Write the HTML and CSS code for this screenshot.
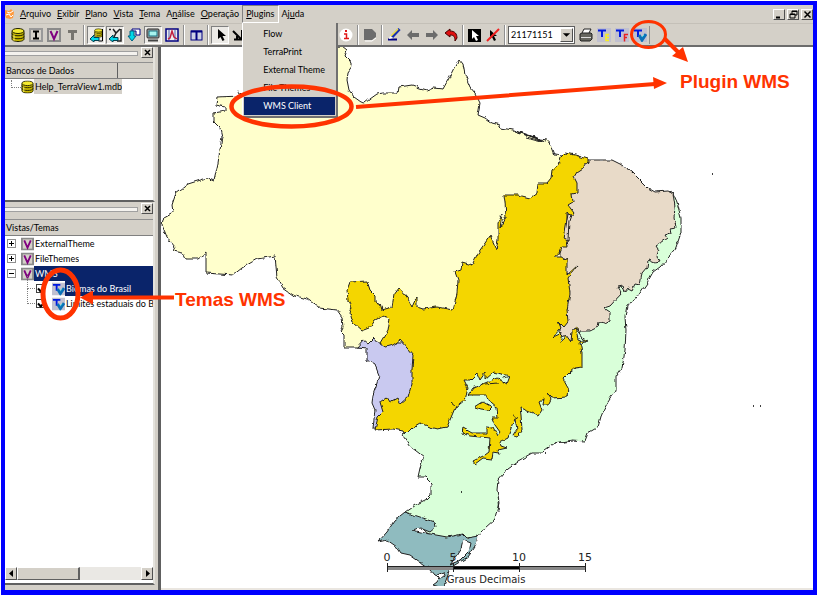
FILE: index.html
```
<!DOCTYPE html>
<html lang="pt-BR">
<head>
<meta charset="utf-8">
<title>TerraView</title>
<link rel="stylesheet" href="styles.css">
</head>
<body>
<svg class="defs" aria-hidden="true">
  <symbol id="db" viewBox="0 0 14 14"><path d="M1 3.500v7.500c0 1.500 2.500 2.500 6 2.500s6-1 6-2.500v-7.500" fill="#c8b800" stroke="#222200"/><ellipse cx="7" cy="3" rx="6" ry="2.500" fill="#f4ea30" stroke="#222200"/><path d="M1 5.500c0 3 12 3 12 0M1 8.500c0 3 12 3 12 0" fill="none" stroke="#222200"/><path d="M3 6.500v6" stroke="#fff36a"/></symbol>
  <symbol id="vbox" viewBox="0 0 14 14"><rect x="1" y="1" width="12" height="12" fill="#d4d0c8" stroke="#8a8a8a" stroke-width="2"/><path d="M3.500 3l3.500 8 3.500-8" fill="none" stroke="#800080" stroke-width="2"/></symbol>
  <symbol id="twms" viewBox="0 0 14 14"><rect width="14" height="14" fill="#c0c0d0"/><path d="M1 2.500h8M5 2v7" stroke="#0018e0" stroke-width="2" fill="none"/><path d="M6 7l3 5 4-6" fill="none" stroke="#0a70b8" stroke-width="3"/><path d="M9 9l2-2" stroke="#3fe0e0"/></symbol>
  <symbol id="cyanarrow" viewBox="0 0 14 14"><path d="M1 11l4-4v2.500h5v3H5V14z" fill="#00d8e8" stroke="#004050"/></symbol>
</svg>

<main class="app">
  <nav class="menubar" aria-label="Menu principal">
    <svg class="logo" viewBox="0 0 10 10"><path d="M0 1l4 1 2-2 3 3-1 6-3 1-4-1-1-3z" fill="#ff9a3c"/><path d="M2 3l3 1 3-2M1 6l3-1 2 3 2-2" stroke="#fff" fill="none"/></svg>
    <button><u>A</u>rquivo</button><button><u>E</u>xibir</button><button><u>P</u>lano</button><button><u>V</u>ista</button><button><u>T</u>ema</button><button>A<u>n</u>álise</button><button><u>O</u>peração</button>
    <div class="menu-open">
      <button class="active" aria-expanded="true"><u>P</u>lugins</button>
      <div class="dropdown" role="menu">
        <button role="menuitem">Flow</button>
        <button role="menuitem">TerraPrint</button>
        <button role="menuitem">External Theme</button>
        <button role="menuitem">File Themes</button>
        <button role="menuitem" class="selected">WMS Client</button>
      </div>
    </div>
    <button>Aj<u>u</u>da</button>
    <div class="window-buttons">
      <button aria-label="Minimizar"><svg viewBox="0 0 9 9"><path d="M1 7.500h4" stroke="#000" stroke-width="2"/></svg></button>
      <button aria-label="Restaurar"><svg viewBox="0 0 9 9"><path d="M3 4V1h5v4H6M3 1.500h5M1 4h5v4H1zM1 4.500h5" stroke="#000" fill="none"/></svg></button>
      <button aria-label="Fechar"><svg viewBox="0 0 9 9"><path d="M1.500 1.500l6 6M7.500 1.500l-6 6" stroke="#000" stroke-width="1.500"/></svg></button>
    </div>
  </nav>

  <div class="toolbar" role="toolbar" aria-label="Ferramentas">
    <div class="group">
      <button aria-label="Banco de dados"><svg viewBox="0 0 14 14"><use href="#db"/></svg></button>
      <button aria-label="Importar"><svg viewBox="0 0 14 14"><rect x="1" y="1" width="12" height="12" fill="#d4d0c8" stroke="#999" stroke-width="2"/><path d="M4 3.500h6M4 10.500h6M7 3v8" stroke="#000" stroke-width="2"/></svg></button>
      <button aria-label="Vista"><svg viewBox="0 0 14 14"><use href="#vbox"/></svg></button>
      <button aria-label="Tema"><svg viewBox="0 0 14 14"><path d="M3 3.500h9M7.500 3v9" stroke="#77756f" stroke-width="3"/></svg></button>
    </div>
    <span class="sep"></span>
    <div class="group wide">
      <button class="pressed" aria-label="Painel de bancos"><svg viewBox="0 0 14 14"><use href="#db" x="5" y="0" width="9" height="10"/><path d="M13.500 1v12h-4" stroke="#000" fill="none"/><use href="#cyanarrow"/></svg></button>
      <button class="pressed" aria-label="Painel de vistas"><svg viewBox="0 0 14 14"><path d="M1 1.500h2M13 1v12h-4M5 1l3 4 4-4M8 5L6 9" stroke="#222" stroke-width="1.500" fill="none"/><use href="#cyanarrow"/></svg></button>
      <button aria-label="Descer"><svg viewBox="0 0 14 14"><path d="M5 1h8v6H9V3H5z" fill="#fff" stroke="#000080"/><path d="M3 3h4v5h2l-4 5-4-5h2z" fill="#00d8e8" stroke="#006080"/></svg></button>
      <button class="pressed" aria-label="Tela"><svg viewBox="0 0 14 14"><rect x="1" y="1" width="12" height="9" rx="1" fill="#a0a0a0" stroke="#222"/><rect x="3" y="3" width="8" height="5" fill="#a8f4ee" stroke="#157080"/><path d="M2 12.500h10" stroke="#444" stroke-width="2"/></svg></button>
      <button aria-label="Gráfico"><svg viewBox="0 0 14 14"><rect x="1" y="1" width="12" height="12" fill="#eee" stroke="#000080" stroke-width="1.500"/><path d="M4 2v10M10 2v10" stroke="#5060b0"/><path d="M3 11l2-1 2-7 2 6 3 2" stroke="#c02040" fill="none" stroke-width="1.500"/></svg></button>
    </div>
    <span class="sep"></span>
    <div class="group">
      <button aria-label="Grade"><svg viewBox="0 0 14 14"><rect x="2" y="3" width="11" height="9" fill="#ccd0e4" stroke="#000080"/><path d="M2 3.500h11M7.500 3v9" stroke="#000080" stroke-width="2"/></svg></button>
    </div>
    <span class="sep"></span>
    <div class="group">
      <button class="pressed" aria-label="Ponteiro"><svg viewBox="0 0 14 14"><path d="M5 1v10l2.500-2 2 4 2-1-2-4H13z" fill="#000"/></svg></button>
      <button aria-label="Zoom por área"><svg viewBox="0 0 14 14"><path d="M2 3l8 8M11 2v9.500H3M6 11.500V8" stroke="#000" stroke-width="2" fill="none"/></svg></button>
      <span class="covered"></span>
      <button aria-label="Informação"><svg viewBox="0 0 14 14"><circle cx="7" cy="7" r="6.500" fill="#fff"/><path d="M5 6h2.500v4M5 10.500h5" stroke="#e01818" stroke-width="1.500" fill="none"/><rect x="6" y="2" width="2" height="2" fill="#e01818"/></svg></button>
    </div>
    <span class="sep"></span>
    <div class="group">
      <button aria-label="Parar"><svg viewBox="0 0 14 14"><path d="M1 1h8l4 4v4l-4 3H1z" fill="#6c6c6c"/><path d="M2 13h7l4-3" stroke="#fff" fill="none"/></svg></button>
    </div>
    <span class="sep"></span>
    <div class="group wide">
      <button aria-label="Desenhar"><svg viewBox="0 0 14 14"><path d="M12.500 1L5 9" stroke="#1830b0" stroke-width="3"/><path d="M11 1L4 8" stroke="#f0e040" stroke-width="1.500"/><path d="M1 11.500h9" stroke="#000080" stroke-width="2"/><path d="M3 8l3 2-4 1z" fill="#fff"/></svg></button>
      <button aria-label="Anterior"><svg viewBox="0 0 14 14"><path d="M1 7l5-5v3h7v4H6v3z" fill="#6c6c6c"/></svg></button>
      <button aria-label="Próximo"><svg viewBox="0 0 14 14"><path d="M13 7L8 2v3H1v4h7v3z" fill="#6c6c6c"/></svg></button>
      <button aria-label="Desfazer"><svg viewBox="0 0 14 14"><path d="M1 5l5-4v2c5 0 7 3 7 7l-2 3c0-4-1-6-5-6v2z" fill="#e01010" stroke="#400"/></svg></button>
    </div>
    <span class="sep"></span>
    <div class="group">
      <button aria-label="Selecionar"><svg viewBox="0 0 14 14"><rect y="1" width="13" height="13" fill="#000"/><path d="M4 2v9l2-2 2 4 2-1-2-4h3z" fill="#fff"/></svg></button>
      <button aria-label="Remover seleção"><svg viewBox="0 0 14 14"><path d="M4 2v9l2-2 2 4 2-1-2-4h3z" fill="#000"/><path d="M13 1L1 13" stroke="#f02020" stroke-width="2"/></svg></button>
    </div>
    <span class="sep"></span>
    <div class="combo">
      <select aria-label="Escala"><option>21171151</option></select>
      <svg viewBox="0 0 12 12" aria-hidden="true"><path d="M2 4h8l-4 4z" fill="#000"/></svg>
    </div>
    <div class="group last">
      <button aria-label="Imprimir"><svg viewBox="0 0 14 14"><path d="M3 5l2-4h7l-2 4" fill="#fff" stroke="#222"/><path d="M1 6l2-1h9l1 1v5l-2 2H2l-1-1z" fill="#66665f" stroke="#222"/><path d="M2 9.500h10" stroke="#ddd"/></svg></button>
      <button aria-label="Tema externo"><svg viewBox="0 0 14 14"><rect width="14" height="14" fill="#c0c0d0"/><path d="M1 2.500h8M5 2v7" stroke="#0018e0" stroke-width="2"/><path d="M12 6.500H9v6h3M9 9.500h3" stroke="#f8ee20" stroke-width="1.500" fill="none"/></svg></button>
      <button aria-label="Tema de arquivo"><svg viewBox="0 0 14 14"><rect width="14" height="14" fill="#c0c0d0"/><path d="M1 2.500h8M5 2v7" stroke="#0018e0" stroke-width="2"/><path d="M13 6.500H9.500v7M9 9.500h3" stroke="#e82020" stroke-width="1.500" fill="none"/></svg></button>
      <button aria-label="Tema WMS"><svg viewBox="0 0 14 14"><use href="#twms"/></svg></button>
    </div>
  </div>

  <div class="workspace">
    <aside class="docks">
      <section class="dock databases">
        <div class="dock-title"><span class="grip"></span><button aria-label="Fechar painel"><svg viewBox="0 0 9 9"><path d="M2 2l5 5M7 2L2 7" stroke="#000" stroke-width="1.500"/></svg></button></div>
        <div class="header"><span class="col">Bancos de Dados</span><span class="rest"></span></div>
        <ul class="tree">
          <li class="row"><span class="branch"></span><svg viewBox="0 0 14 14"><use href="#db"/></svg><span class="db-name">Help_TerraView1.mdb</span></li>
        </ul>
      </section>
      <section class="dock views">
        <div class="dock-title"><span class="grip"></span><button aria-label="Fechar painel"><svg viewBox="0 0 9 9"><path d="M2 2l5 5M7 2L2 7" stroke="#000" stroke-width="1.500"/></svg></button></div>
        <div class="header"><span class="rest">Vistas/Temas</span></div>
        <ul class="tree">
          <li class="row"><button class="toggle" aria-label="Expandir"><svg viewBox="0 0 7 7"><path d="M1 3.500h5M3.500 1v5" stroke="#000"/></svg></button><svg viewBox="0 0 14 14"><use href="#vbox"/></svg><span>ExternalTheme</span></li>
          <li class="row"><button class="toggle" aria-label="Expandir"><svg viewBox="0 0 7 7"><path d="M1 3.500h5M3.500 1v5" stroke="#000"/></svg></button><svg viewBox="0 0 14 14"><use href="#vbox"/></svg><span>FileThemes</span></li>
          <li class="row current"><button class="toggle" aria-label="Recolher"><svg viewBox="0 0 7 7"><path d="M1 3.500h5" stroke="#000"/></svg></button><svg viewBox="0 0 14 14"><use href="#vbox"/></svg><span class="fill">WMS</span></li>
          <li class="row child current"><span class="branch"></span><input id="biomas" type="checkbox" checked><svg viewBox="0 0 14 14"><use href="#twms"/></svg><label class="fill" for="biomas">Biomas do Brasil</label></li>
          <li class="row child"><span class="branch"></span><input id="limites" type="checkbox" checked><svg viewBox="0 0 14 14"><use href="#twms"/></svg><label for="limites">Limites estaduais do Bra</label></li>
        </ul>
        <div class="scrollbar">
          <button aria-label="Rolar à esquerda"><svg viewBox="0 0 9 9"><path d="M6 1v7L2 4.500z" fill="#000"/></svg></button>
          <span class="thumb"></span><span class="track"></span>
          <button aria-label="Rolar à direita"><svg viewBox="0 0 9 9"><path d="M3 1v7l4-3.500z" fill="#000"/></svg></button>
        </div>
      </section>
    </aside>

    <section class="canvas" aria-label="Mapa">
      <svg viewBox="161 47 652 539" preserveAspectRatio="xMinYMin meet">
        <defs>
          <filter id="coast" filterUnits="userSpaceOnUse" x="150" y="40" width="560" height="560" color-interpolation-filters="sRGB">
            <feTurbulence type="fractalNoise" baseFrequency="0.16" numOctaves="2" seed="4" result="n"/>
            <feDisplacementMap in="SourceGraphic" in2="n" scale="4" xChannelSelector="R" yChannelSelector="G"/>
          </filter>
        </defs>
        <g filter="url(#coast)" stroke="#222" stroke-width="1" stroke-linejoin="round">
          <path fill="#ffffcc" d="M217 97L240 96 238 92 243 95 262 95 300 60 325 47 342 46 347 50 345 56 350 61 352 66 348 72 347 80 349 90 354 97 361 102 365 103 370 99 377 94 383 93 392 93 398 93 399 87 412 85 420 88 427 90 433 88 443 89 448 80 454 68 459 59 463 64 465 75 470 87 475 93 480 103 478 115 485 118 492 123 500 125 501 128 513 130 530 136 540 139 547 140 552 147 555 155 562 156 565 153 560 320 400 380 380 347 344 347 344 335 341 332 343 328 342 317 337 310 320 308 307 299 293 295 283 288 277 277 275 256 257 259 242 268 233 275 206 273 206 253 198 259 186 259 183 253 173 251 175 247 167 237 162 225 164 217 173 212 172 205 176 193 188 184 207 178 214 181 218 163 222 137 220 128 214 122 214 113 225 111 225 107 216 105z"/>
          <path fill="#d9ffd9" d="M673 193L677 202 681 218 681 233 675 250 668 258 660 267 653 272 647 283 640 293 633 302 627 305 625 317 626 330 625 350 623 363 622 368 616 377 616 390 608 402 602 413 598 427 588 433 585 441 572 440 555 443 545 450 542 453 532 453 518 461 508 468 498 480 497 490 499 502 495 519 485 528 478 537 440 545 405 512 415 505 427 499 431 495 431 483 425 477 418 477 420 468 424 457 411 447 403 436 413 400 480 360 570 310 650 240z"/>
          <path fill="#e8dac8" d="M585 160L612 160 620 164 632 172 648 188 655 192 668 191 673 193 675 207 674 218 676 227 670 228 671 233 665 235 667 238 657 245 659 248 657 257 660 262 655 263 648 260 647 267 642 273 640 285 635 284 632 290 628 288 625 292 623 286 618 287 622 293 610 306 604 308 610 312 610 320 605 323 599 322 598 327 590 331 580 331 578 345 560 335 560 170z"/>
          <path fill="#c9c9f0" d="M357 347L363 340 368 344 374 338 378 343 420 343 420 400 385 429 373 428 375 410 372 403 373 395 377 383 379 375 375 365 367 360 367 348z"/>
          <path fill="#f4d600" d="M565 153L575 155 588 159 588 162 583 168 577 172 574 177 577 183 577 193 572 194 573 202 568 205 574 213 570 216 567 212 567 223 568 228 567 240 568 247 562 247 560 252 554 257 562 257 564 261 567 257 567 275 578 265 568 278 570 293 567 310 568 322 564 327 558 321 561 328 553 337 562 333 560 343 566 335 571 342 572 331 577 327 578 337 588 341 580 343 582 353 582 367 575 368 570 372 563 379 568 388 567 397 552 398 547 393 551 399 548 405 543 405 544 399 539 402 542 410 538 416 530 412 520 408 521 415 522 430 517 437 513 436 517 430 515 418 512 425 508 438 500 442 501 446 507 448 498 450 500 454 493 453 492 459 483 458 475 464 473 461 485 455 489 452 490 438 470 436 462 433 463 428 472 433 487 433 487 427 493 428 497 436 500 432 495 425 492 418 498 418 497 408 490 402 487 395 468 395 473 388 485 383 497 378 507 384 510 376 493 372 485 379 485 373 480 380 477 373 470 380 464 380 468 388 465 400 455 408 447 427 438 429 430 427 420 423 413 427 405 435 403 431 393 429 375 430 378 417 383 412 380 402 387 397 390 402 397 398 400 404 408 397 412 383 412 370 413 355 407 348 400 340 393 345 385 347 380 343 383 338 388 330 390 318 383 316 375 320 370 328 362 331 353 323 350 313 352 308 348 300 347 290 350 282 367 281 370 290 375 295 375 302 380 303 382 310 392 307 394 295 399 288 407 297 412 307 417 296 417 307 423 309 437 307 453 310 457 293 458 280 455 272 461 270 462 262 472 265 478 253 490 236 496 249 498 240 498 223 502 215 500 228 506 217 505 202 504 195 518 195 530 198 537 193 538 183 547 183 551 178 552 170 558 165 560 158z"/>
          <path fill="#d9ffd9" d="M575 328l4 6 6 8-7-3z"/>
          <path fill="#e8dac8" d="M568 214l3 1-2 6-1 19-4-2 2-12z"/>
          <path fill="#f4d600" d="M475 407l8-5 9 5-3 3-8-1z"/>
          <path fill="none" d="M450 403l6 5M485 384l14-1M503 378l7-2M513 416l5 2M555 443l18-2M498 500l1 12M514 131l28 9M520 132l20 7M526 137l20 5M530 136l13 5"/>
          <path fill="#8fbbbf" d="M405 512L420 517 435 522 436 527 430 532 420 528 412 530 425 533 447 537 463 534 467 538 478 536 475 547 468 557 458 563 450 568 448 575 443 588 433 585 437 582 440 577 435 575 430 569 420 562 410 555 401 553 397 547 387 540 378 542 387 532 395 520z"/>
          <path fill="#fff" d="M463 540l8 3-2 9-8 8-10 4 5-8 5-8zM437 575l7-3 1 4-5 4z"/>
        </g>
        <path d="M712 174h1M753 406h1M760 406h1M461 492h1M545 453h1" stroke="#000" stroke-width="1.500"/>
        <path d="M387 568h66M519 568h66" stroke="#888" stroke-width="4"/>
        <path d="M453 568h66" stroke="#000" stroke-width="3"/>
        <path d="M387.500 563v9M453.500 563v9M519.500 563v9M585.500 563v9M387 566.500h198" stroke="#222"/>
        <g class="scale-text"><text x="387" y="561">0</text><text x="453" y="561">5</text><text x="519" y="561">10</text><text x="585" y="561">15</text><text class="unit" x="486" y="583">Graus Decimais</text></g>
      </svg>
    </section>
  </div>

</main>
<svg class="callouts" viewBox="0 0 818 595" preserveAspectRatio="xMinYMin meet">
  <g fill="none" stroke="#ff3300">
    <ellipse cx="291.500" cy="106.500" rx="60" ry="20" stroke-width="4.500"/>
    <ellipse cx="648.500" cy="34.500" rx="17" ry="13" stroke-width="3"/>
    <ellipse cx="60.500" cy="294" rx="17.500" ry="24" stroke-width="5"/>
    <path d="M356 107L655 84M90 297.500h84" stroke-width="4"/><path d="M664 38L680 54" stroke-width="4"/>
  </g>
  <path fill="#ff3300" d="M653 77l14 6-13 6zM688 62l-16-6 11-9zM80 297.500l13-7v14z"/>
  <text x="680" y="88">Plugin WMS</text><text x="175" y="306">Temas WMS</text>
</svg>
</body>
</html>
```
FILE: styles.css
```
* { box-sizing: border-box; }

body {
  margin: 0;
  padding: 1px 1px 0;
  height: 100vh;
  display: flex;
  position: relative;
  overflow: hidden;
  background: #fff;
  color: #000;
  font: 9px/14px Lato, "Liberation Sans", sans-serif;
}

button, select, input { font: inherit; color: inherit; margin: 0; padding: 0; border: 0; background: none; }
u { text-underline-offset: 1px; }
svg { display: block; }
.defs { position: absolute; width: 0; height: 0; }

.app {
  flex: 1;
  min-width: 0;
  display: flex;
  flex-direction: column;
  border: 4px solid #0000ff;
  border-bottom-width: 5px;
  background: #d4d0c8;
}

.menubar { display: flex; align-items: center; height: 19px; border-bottom: 1px solid #c4c0b8; }
.menubar > button, .menu-open > button { height: 18px; padding: 0 3px; white-space: nowrap; }
.logo { width: 10px; height: 10px; margin-right: 2px; }
.menu-open { position: relative; }
.menu-open > .active { display: block; border: 1px solid #808080; border-right-color: #fff; border-bottom-color: #fff; }
.dropdown {
  position: absolute;
  z-index: 2;
  top: 18px;
  left: 0;
  width: 96px;
  padding: 2px 1px 1px;
  display: flex;
  flex-direction: column;
  background: #d4d0c8;
  border-left: 1px solid #fff;
  border-right: 2px solid #707070;
  border-bottom: 2px solid #707070;
}
.dropdown button { height: 18px; padding-left: 19px; text-align: left; }
.dropdown .selected { background: #0a246a; color: #fff; }

.window-buttons { margin-left: auto; display: flex; gap: 2px; }
.window-buttons button, .dock-title button, .scrollbar button {
  width: 12px;
  height: 11px;
  display: grid;
  place-items: center;
  background: #d4d0c8;
  border: 1px solid #fff;
  border-right-color: #505050;
  border-bottom-color: #505050;
}
.window-buttons svg, .dock-title svg, .scrollbar svg { width: 9px; height: 9px; }

.toolbar { display: flex; align-items: center; height: 23px; padding-left: 4px; border-bottom: 2px solid #6c6c6c; }
.group { display: flex; }
.group.wide { gap: 1px; }
.group button { width: 18px; height: 18px; display: grid; place-items: center; }
.group svg { width: 14px; height: 14px; }
.group .pressed { background: #eceae6; border: 1px solid #808080; border-right-color: #fff; border-bottom-color: #fff; }
.covered { width: 90px; }
.sep { width: 2px; height: 20px; margin: 0 2px; border-left: 1px solid #909090; border-right: 1px solid #fff; }
.combo { position: relative; width: 67px; height: 18px; margin-right: 2px; border: 1px solid #606060; background: #fff; }
.combo select { appearance: none; width: 100%; height: 16px; padding: 0 2px; }
.combo svg { position: absolute; top: 1px; right: 1px; width: 13px; height: 14px; background: #d4d0c8; border: 1px solid #fff; border-right-color: #505050; border-bottom-color: #505050; pointer-events: none; }
.group.last { border-right: 1px solid #909090; }

.workspace { flex: 1; min-height: 0; display: flex; }
.docks { flex: none; width: 156px; display: flex; flex-direction: column; padding-right: 3px; border-right: 3px solid #606060; }
.dock { display: flex; flex-direction: column; background: #fff; border-right: 2px solid #e4e2dc; }
.databases { height: 155px; border-bottom: 2px solid #606060; }
.views { flex: 1; min-height: 0; border-bottom: 2px solid #606060; margin-bottom: 5px; }
.dock-title { display: flex; align-items: flex-start; height: 15px; background: #d4d0c8; }
.views .dock-title { height: 17px; padding-top: 1px; }
.grip { flex: 1; height: 5px; margin: 4px 3px 0 0; border: 1px solid #a0a0a0; border-left: 0; background: #f4f2ee; }
.header { display: flex; height: 17px; background: #d4d0c8; border-top: 1px solid #909090; border-bottom: 1px solid #808080; line-height: 16px; }
.header .col { width: 113px; border-right: 1px solid #606060; }
.header span { padding-left: 1px; }

.tree { flex: 1; min-height: 0; margin: 0; padding: 0; list-style: none; overflow: hidden; }
.row { display: flex; align-items: center; height: 15px; line-height: 15px; white-space: nowrap; }
.row > svg { flex: none; width: 13px; height: 14px; }
.branch { flex: none; width: 10px; height: 8px; margin: 0 0 6px 6px; border-left: 1px dotted #808080; border-bottom: 1px dotted #808080; }
.db-name { background: #d4d0c8; }
.toggle { flex: none; width: 9px; height: 9px; margin: 0 5px 0 2px; border: 1px solid #909090; background: #fff; }
.row > span:last-child, .row > label { padding-left: 1px; min-width: 0; overflow: hidden; }
.child .branch { width: 8px; height: 15px; margin: 0 0 14px 22px; }
.child input { appearance: none; flex: none; width: 9px; height: 9px; margin: 0 7px 0 1px; border: 1px solid #404040; background: #fff; }
.child input:checked::before { content: ""; display: block; width: 5px; height: 3px; margin: 1px; border-left: 2px solid #000; border-bottom: 2px solid #000; rotate: -45deg; }
.current .fill { flex: 1; background: #0a246a; color: #fff; }

.scrollbar { display: flex; height: 13px; margin-bottom: 3px; background: #eae8e4; }
.scrollbar button { height: 13px; }
.thumb { width: 63px; background: #d4d0c8; border: 1px solid #fff; border-right: 2px solid #606060; border-bottom-color: #606060; }
.track { flex: 1; }

.canvas { flex: 1; min-width: 0; background: #fff; border-bottom: 2px solid #eae6e0; }
.canvas svg { width: 100%; height: auto; overflow: hidden; }
.scale-text { font: 11px "DejaVu Sans", sans-serif; text-anchor: middle; fill: #222; }
.scale-text .unit { font-size: 10px; }

.callouts { position: absolute; z-index: 3; inset: 0; width: 100%; pointer-events: none; }
.callouts text { font: bold 19px "Liberation Sans", sans-serif; fill: #ff3300; }
```
